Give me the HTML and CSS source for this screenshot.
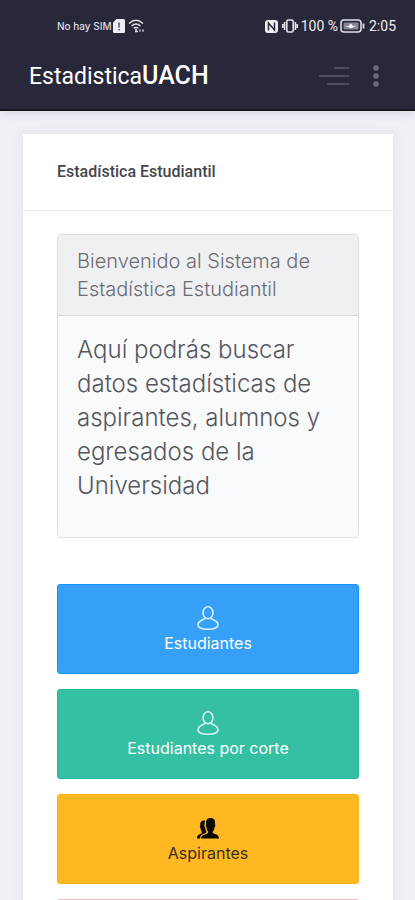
FILE: index.html
```html
<!DOCTYPE html>
<html lang="es">
<head>
<meta charset="utf-8">
<meta name="viewport" content="width=device-width, initial-scale=1">
<title>EstadisticaUACH</title>
<link rel="stylesheet" href="styles.css">
</head>
<body>
<svg class="sprite" aria-hidden="true">
  <symbol id="user" viewBox="0 0 22 24">
    <ellipse cx="11" cy="6.800" rx="5" ry="6"/>
    <path d="M8 12C8 14 1 14 1 18.800C1 21.800 5 23.200 11 23.200S21 21.800 21 18.800C21 14 14 14 14 12"/>
  </symbol>
</svg>
<div class="app">
  <header class="top">
    <div class="status">
      <div class="status-group">
        <span class="carrier">No hay SIM</span>
        <svg width="12" height="14" viewBox="0 0 12 14"><path d="M3.500 0H10.500Q12 0 12 1.500V12.500Q12 14 10.500 14H1.500Q0 14 0 12.500V3.500Z" fill="#eeeef2"/><path d="M6 3.500V8.500M6 10V11.500" stroke="#77778a" stroke-width="2"/></svg>
        <svg class="wifi" width="17" height="14" viewBox="0 0 17 14" fill="none" stroke="#dddde5" stroke-width="1.500"><path d="M1 4.500Q8 -2 15 4.500M3.500 7Q8 3 12.500 7M5.800 9.300Q8 7.500 10.200 9.300"/><path d="M8 10V13M7 12.500H10M12 12.500V10.500M15 10.500V12.500"/></svg>
      </div>
      <div class="status-group">
        <svg width="13" height="13" viewBox="0 0 13 13"><rect width="13" height="13" rx="3" fill="#eeeef2"/><path d="M3.500 10.500V3L9.500 10V2.500" fill="none" stroke="#28283a" stroke-width="1.500"/></svg>
        <svg class="vibrate" width="16" height="14" viewBox="0 0 16 14" fill="none" stroke="#e2e2e9" stroke-width="1.600"><rect x="4.800" y="1" width="6.400" height="12" rx="1.500"/><path d="M2.600 3V11M13.400 3V11M.8 5V9M15.200 5V9"/></svg>
        <span class="battery-text">100 %</span>
        <svg width="25" height="14" viewBox="0 0 25 14"><rect x="1" y="1" width="20" height="12" rx="3" fill="none" stroke="#dedee6" stroke-width="1.600"/><rect x="3.500" y="3.500" width="15" height="7" rx="1" fill="#858594"/><path d="M5 7H8.500L11 4.500L13 7H17L13.500 8L11 9.500L8.500 8Z" fill="#fff"/><path d="M23.500 4.500V9.500" stroke="#dedee6" stroke-width="1.800"/></svg>
        <time class="clock">2:05</time>
      </div>
    </div>
    <div class="navbar">
      <a class="brand" href="#">Estadistica<strong>UACH</strong></a>
      <div class="actions">
        <button type="button" class="icon-btn" aria-label="Menú"><svg width="32" height="20" viewBox="0 0 32 20" stroke="#58586a" stroke-width="1.600"><path d="M16 2H31M1 10H31M9 18H31"/></svg></button>
        <button type="button" class="icon-btn" aria-label="Opciones"><svg width="8" height="22" viewBox="0 0 8 22" fill="#686879"><circle cx="4" cy="3" r="2.800"/><circle cx="4" cy="11" r="2.800"/><circle cx="4" cy="19" r="2.800"/></svg></button>
      </div>
    </div>
  </header>
  <main class="content">
    <section class="portlet">
      <h1 class="portlet-title">Estadística Estudiantil</h1>
      <div class="portlet-body">
        <article class="card">
          <h2 class="card-title">Bienvenido al Sistema de Estadística Estudiantil</h2>
          <p class="card-text">Aquí podrás buscar datos estadísticas de aspirantes, alumnos y egresados de la Universidad</p>
        </article>
        <nav class="tiles">
          <button type="button" class="tile blue"><svg class="line-icon" width="22" height="24"><use href="#user"/></svg>Estudiantes</button>
          <button type="button" class="tile green"><svg class="line-icon" width="22" height="24"><use href="#user"/></svg>Estudiantes por corte</button>
          <button type="button" class="tile yellow"><svg width="22" height="24" viewBox="0 0 22 24"><path d="M4 22.500H22C22 19.500 20.500 18.800 18 18C16 17.400 15.500 17 15.700 15.500C17 14.500 17.300 13 17.500 11.200C18.500 10.500 18.600 8.800 17.900 8.200C18.400 4.500 17.500 2 13.500 2C9.800 2 8.800 4.300 9.200 8.200C8.400 8.800 8.600 10.500 9.500 11.200C9.700 13 10 14.500 11.200 15.500C11.300 17.200 10.600 17.500 8.500 18.200C5.500 19.200 4.200 19.800 4 22.500Z"/><path d="M0 22.500H3C3 19.500 5 18.200 8.500 17C9.500 16.600 9.800 16.300 9.500 15.600C8.700 14.500 8.400 13.500 8.300 12C7.200 11 7 9 7.700 7.800C7.600 6.300 7.800 5.300 8.200 4.500C4.800 4 3 5.500 3.200 9.500C2.600 10 2.700 11.400 3.500 12C3.700 13.800 4 15 4.800 15.800C4.900 17.500 4.200 17.800 3 18.200C1 18.900 0 19.800 0 22.500Z"/></svg>Aspirantes</button>
          <div class="tile pink" aria-hidden="true"></div>
        </nav>
      </div>
    </section>
  </main>
</div>
</body>
</html>
```
FILE: styles.css
```css
* { box-sizing: border-box; }
body {
  margin: 0;
  background: #f0f1f6;
  color: #55565b;
  font-family: Inter, "Open Sans", sans-serif;
}
h1, h2, p { margin: 0; }
svg { display: block; flex: none; }
button { border: 0; font: inherit; cursor: pointer; }
.sprite { position: absolute; width: 0; height: 0; }
.app { height: 100vh; overflow: hidden; }

.top {
  height: 111px;
  background: #28283a;
  border-bottom: 2px solid #171722;
  box-shadow: 0 1px 10px rgba(40, 40, 70, 0.18);
  color: #fff;
  font-family: Roboto, sans-serif;
}
.status {
  display: flex;
  justify-content: space-between;
  padding: 16px 19px 0 57px;
}
.status-group { display: flex; align-items: center; height: 20px; }
.carrier { margin-right: 1px; font: 500 10px Inter, sans-serif; color: #dcdce4; }
.wifi { margin-left: 3px; }
.vibrate { margin: 0 3px 0 4px; }
.battery-text, .clock { font-size: 14px; color: #eeeef2; }
.battery-text { margin-right: 2px; }
.clock { margin-left: 4px; }
.navbar {
  display: flex;
  align-items: center;
  justify-content: space-between;
  height: 40px;
  margin-top: 20px;
  padding: 0 35px 0 29px;
}
.brand { color: #fff; font-size: 23px; line-height: 40px; text-decoration: none; }
.brand strong { font-size: 25px; font-weight: 500; }
.actions { display: flex; align-items: center; gap: 22px; }
.icon-btn { padding: 0; background: none; }

.content { padding: 23px 22px 0 23px; }
.portlet { background: #fff; box-shadow: 0 0 12px rgba(82, 63, 105, 0.08); }
.portlet-title {
  padding: 24px 34px;
  border-bottom: 1px solid #ebecef;
  color: #44454c;
  font: 500 16px/28px Roboto, sans-serif;
}
.portlet-body { padding: 23px 34px; }
.card {
  border: 1px solid #dddfe1;
  border-radius: 4px;
  background: #f9fafc;
  font-weight: 300;
}
.card-title {
  padding: 12px 19px;
  border-bottom: 1px solid #d9dbdd;
  background: #eff0f2;
  color: #6b6c72;
  font-size: 20px;
  font-weight: 300;
  line-height: 28px;
}
.card-text { padding: 17px 19px 34px; font-size: 24px; line-height: 34px; }
.tiles { display: grid; gap: 15px; margin-top: 46px; }
.tile {
  display: flex;
  flex-direction: column;
  align-items: center;
  width: 100%;
  height: 90px;
  padding: 21px 16px;
  border: 1px solid;
  border-radius: 3px;
  color: #fff;
  font-size: 16px;
  line-height: 26px;
}
.line-icon { fill: none; stroke: #d8f2ff; stroke-width: 1.600px; }
.blue { background: #36a0f6; border-color: #1696f3; }
.green { background: #35bfa3; border-color: #20b99a; }
.yellow { background: #ffb822; border-color: #fbb313; color: #382e18; }
.yellow svg { fill: #0b0903; }
.pink { background: #fd397a; border-color: #f0bcc8; }
```
